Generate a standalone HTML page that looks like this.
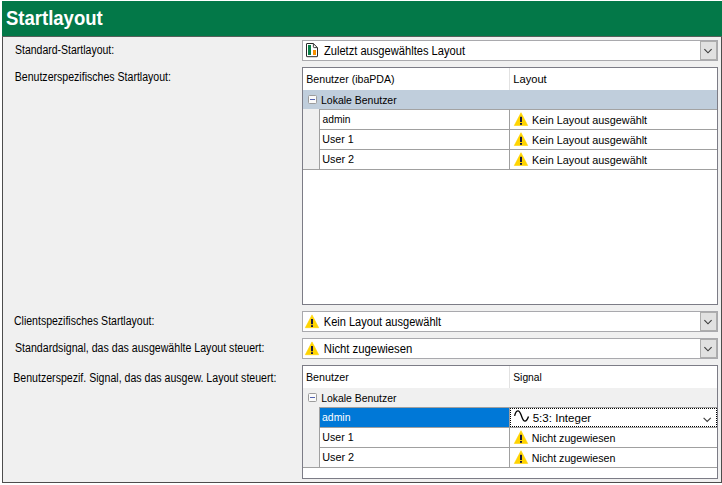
<!DOCTYPE html>
<html><head><meta charset="utf-8">
<style>
html,body{margin:0;padding:0;background:#fff;}
body{width:722px;height:485px;position:relative;overflow:hidden;font-family:"Liberation Sans",sans-serif;font-size:12px;color:#000;}
.a{position:absolute;}
.t{position:absolute;white-space:nowrap;line-height:14px;transform-origin:0 0;}
#panel{left:2px;top:1px;width:718px;height:481px;background:#f0f0f0;border-left:1px solid #4d4d4d;border-right:1px solid #4d4d4d;border-bottom:1px solid #4d4d4d;}
#hdr{left:2px;top:1px;width:720px;height:35px;background:#037848;}
.combo{left:302px;width:414px;height:19px;background:#fff;border:1px solid #a9a9ad;}
.btn{left:700px;width:15px;height:17px;background:#e1e1e1;border:1px solid #adadad;}
.grid{left:302px;width:414px;background:#fff;border:1px solid #7c7c86;}
.hl{position:absolute;height:1px;background:#a0a0a0;}
.vl{position:absolute;width:1px;background:#a0a0a0;}
svg{position:absolute;overflow:visible;}
</style></head><body>
<div class="a" id="panel"></div>
<div class="a" id="hdr"></div>
<div class="a" style="left:2px;top:36px;width:720px;height:1px;background:#55605a"></div>

<!-- combos -->
<div class="a combo" style="top:40px"></div><div class="a btn" style="top:41px"></div>
<div class="a combo" style="top:311px"></div><div class="a btn" style="top:312px"></div>
<div class="a combo" style="top:338px"></div><div class="a btn" style="top:339px"></div>

<!-- grid 1 -->
<div class="a grid" style="top:67px;height:236px"></div>
<div class="a" style="left:509px;top:68px;width:1px;height:22px;background:#e2e2e2"></div>
<div class="a" style="left:303px;top:90px;width:414px;height:19px;background:#c0cedc"></div>
<div class="a" style="left:303px;top:109px;width:16px;height:61px;background:#f0f0f0"></div>
<div class="hl" style="left:319px;top:109px;width:398px;background:#a3a3a3"></div>
<div class="hl" style="left:319px;top:129px;width:398px"></div>
<div class="hl" style="left:319px;top:149px;width:398px"></div>
<div class="hl" style="left:303px;top:169px;width:414px"></div>
<div class="vl" style="left:319px;top:109px;height:61px"></div>
<div class="vl" style="left:509px;top:109px;height:61px"></div>

<!-- grid 2 -->
<div class="a grid" style="top:365px;height:112px"></div>
<div class="a" style="left:509px;top:366px;width:1px;height:22px;background:#e2e2e2"></div>
<div class="a" style="left:303px;top:388px;width:414px;height:19px;background:#f0f0f0"></div>
<div class="a" style="left:303px;top:407px;width:16px;height:61px;background:#f0f0f0"></div>
<div class="hl" style="left:319px;top:407px;width:398px"></div>
<div class="hl" style="left:319px;top:427px;width:398px"></div>
<div class="hl" style="left:319px;top:447px;width:398px"></div>
<div class="hl" style="left:303px;top:467px;width:414px"></div>
<div class="vl" style="left:319px;top:407px;height:61px"></div>
<div class="vl" style="left:509px;top:407px;height:61px"></div>
<div class="a" style="left:320px;top:408px;width:189px;height:19px;background:#0078d7"></div>
<div class="a" style="left:510px;top:408px;width:205px;height:17px;border:1px dotted #000;background:#fff"></div>

<svg width="722" height="485" viewBox="0 0 722 485" style="left:0;top:0">
 <!-- doc icon -->
 <path d="M307 43.5 H313.3 L317.5 47.7 V56.3 Q317.5 56.7 317.1 56.7 H306.9 Q306.5 56.7 306.5 56.3 V43.9 Q306.5 43.5 306.9 43.5 Z" fill="#fff" stroke="#2b2b2b" stroke-width="1"/>
 <path d="M313.4 43.6 V46.8 Q313.4 47.6 314.2 47.6 H317.4" fill="none" stroke="#2b2b2b" stroke-width="0.9"/>
 <rect x="308" y="45" width="3" height="10" fill="#0a8048"/>
 <rect x="313" y="50" width="3" height="5" fill="#f79000"/>
 <!-- chevrons -->
 <g transform="translate(704 49.2)"><path d="M0.4 0 L4 3.6 L7.6 0" fill="none" stroke="#3c3c3c" stroke-width="1.15"/></g>
 <g transform="translate(704 320.2)"><path d="M0.4 0 L4 3.6 L7.6 0" fill="none" stroke="#3c3c3c" stroke-width="1.15"/></g>
 <g transform="translate(704 347.2)"><path d="M0.4 0 L4 3.6 L7.6 0" fill="none" stroke="#3c3c3c" stroke-width="1.15"/></g>
 <g transform="translate(703.2 417.8)"><path d="M0.4 0 L4 3.6 L7.6 0" fill="none" stroke="#3c3c3c" stroke-width="1.15"/></g>
 <!-- warnings -->
 <g transform="translate(305 314.5)"><path d="M7 0.4 L13.7 13.2 L0.3 13.2 Z" fill="#ffd400" stroke="#ffd400" stroke-width="0.6" stroke-linejoin="round"/>
    <rect x="6" y="4.5" width="2" height="5.2" fill="#1a1a40"/>
    <rect x="6" y="10.7" width="2" height="1.8" fill="#1a1a40"/></g>
 <g transform="translate(305 341.5)"><path d="M7 0.4 L13.7 13.2 L0.3 13.2 Z" fill="#ffd400" stroke="#ffd400" stroke-width="0.6" stroke-linejoin="round"/>
    <rect x="6" y="4.5" width="2" height="5.2" fill="#1a1a40"/>
    <rect x="6" y="10.7" width="2" height="1.8" fill="#1a1a40"/></g>
 <g transform="translate(514 112.3)"><path d="M7 0.4 L13.7 13.2 L0.3 13.2 Z" fill="#ffd400" stroke="#ffd400" stroke-width="0.6" stroke-linejoin="round"/>
    <rect x="6" y="4.5" width="2" height="5.2" fill="#1a1a40"/>
    <rect x="6" y="10.7" width="2" height="1.8" fill="#1a1a40"/></g>
 <g transform="translate(514 132.3)"><path d="M7 0.4 L13.7 13.2 L0.3 13.2 Z" fill="#ffd400" stroke="#ffd400" stroke-width="0.6" stroke-linejoin="round"/>
    <rect x="6" y="4.5" width="2" height="5.2" fill="#1a1a40"/>
    <rect x="6" y="10.7" width="2" height="1.8" fill="#1a1a40"/></g>
 <g transform="translate(514 152.3)"><path d="M7 0.4 L13.7 13.2 L0.3 13.2 Z" fill="#ffd400" stroke="#ffd400" stroke-width="0.6" stroke-linejoin="round"/>
    <rect x="6" y="4.5" width="2" height="5.2" fill="#1a1a40"/>
    <rect x="6" y="10.7" width="2" height="1.8" fill="#1a1a40"/></g>
 <g transform="translate(514 430.3)"><path d="M7 0.4 L13.7 13.2 L0.3 13.2 Z" fill="#ffd400" stroke="#ffd400" stroke-width="0.6" stroke-linejoin="round"/>
    <rect x="6" y="4.5" width="2" height="5.2" fill="#1a1a40"/>
    <rect x="6" y="10.7" width="2" height="1.8" fill="#1a1a40"/></g>
 <g transform="translate(514 450.3)"><path d="M7 0.4 L13.7 13.2 L0.3 13.2 Z" fill="#ffd400" stroke="#ffd400" stroke-width="0.6" stroke-linejoin="round"/>
    <rect x="6" y="4.5" width="2" height="5.2" fill="#1a1a40"/>
    <rect x="6" y="10.7" width="2" height="1.8" fill="#1a1a40"/></g>
 <!-- expanders -->
 <g transform="translate(308 95)"><rect x="0.5" y="0.5" width="8" height="8" rx="1" fill="#fafafa" stroke="#9c9c9c"/>
    <rect x="2" y="4" width="5" height="1" fill="#5363b0"/></g>
 <g transform="translate(308 393)"><rect x="0.5" y="0.5" width="8" height="8" rx="1" fill="#fafafa" stroke="#9c9c9c"/>
    <rect x="2" y="4" width="5" height="1" fill="#5363b0"/></g>
 <!-- sine -->
 <path d="M514.6 415.8 C515.5 412.4 516.7 410.9 518 410.9 C519.8 410.9 520.6 413.6 521.5 416 C522.4 418.4 523.2 421.1 525 421.1 C526.4 421.1 527.5 419.4 528.5 416.6" fill="none" stroke="#000" stroke-width="1.35"/>
</svg>
<div class="t" id="title" style="left:6px;top:8px;transform:translateX(0.01px) scale(0.9646,1.03);font-weight:bold;font-size:19.2px;color:#fff;line-height:22px;transform-origin:0 17px;">Startlayout</div>
<div class="t" id="l1" style="left:14px;top:43px;transform:translateX(0.96px) scaleX(0.8749);">Standard-Startlayout:</div>
<div class="t" id="l2" style="left:14px;top:70px;transform:translateX(0.76px) scaleX(0.8804);">Benutzerspezifisches Startlayout:</div>
<div class="t" id="l3" style="left:13px;top:314px;transform:translateX(0.98px) scaleX(0.8769);">Clientspezifisches Startlayout:</div>
<div class="t" id="l4" style="left:15px;top:341px;transform:translateX(0.03px) scaleX(0.8839);">Standardsignal, das das ausgewählte Layout steuert:</div>
<div class="t" id="l5" style="left:13px;top:371px;transform:translateX(0.26px) scaleX(0.8825);">Benutzerspezif. Signal, das das ausgew. Layout steuert:</div>
<div class="t" id="c1t" style="left:323px;top:44px;transform:translateX(0.95px) scaleX(0.9272);">Zuletzt ausgewähltes Layout</div>
<div class="t" id="c2t" style="left:323px;top:315px;transform:translateX(0.78px) scaleX(0.9204);">Kein Layout ausgewählt</div>
<div class="t" id="c3t" style="left:323px;top:342px;transform:translateX(0.71px) scaleX(0.9423);">Nicht zugewiesen</div>
<div class="t" id="g1h1" style="left:306px;top:72px;transform:translateX(0.31px) scaleX(0.9628);font-size:11px;">Benutzer (ibaPDA)</div>
<div class="t" id="g1h2" style="left:513px;top:72px;transform:translateX(0.23px) scaleX(1.0131);font-size:11px;">Layout</div>
<div class="t" id="g1grp" style="left:320px;top:93px;transform:translateX(0.99px) scaleX(0.9521);font-size:11px;">Lokale Benutzer</div>
<div class="t" id="g1r1a" style="left:322px;top:112px;transform:translateX(0.51px) scaleX(0.9341);font-size:11px;">admin</div>
<div class="t" id="g1r2a" style="left:322px;top:132px;transform:translateX(0.37px) scaleX(0.9653);font-size:11px;">User 1</div>
<div class="t" id="g1r3a" style="left:322px;top:152px;transform:translateX(0.15px) scaleX(0.9867);font-size:11px;">User 2</div>
<div class="t" id="g1r1b" style="left:531px;top:113px;transform:translateX(0.98px) scaleX(0.9858);font-size:11px;">Kein Layout ausgewählt</div>
<div class="t" id="g1r2b" style="left:531px;top:133px;transform:translateX(0.98px) scaleX(0.9858);font-size:11px;">Kein Layout ausgewählt</div>
<div class="t" id="g1r3b" style="left:531px;top:153px;transform:translateX(0.98px) scaleX(0.9858);font-size:11px;">Kein Layout ausgewählt</div>
<div class="t" id="g2h1" style="left:305px;top:370px;transform:translateX(0.94px) scaleX(0.9745);font-size:11px;">Benutzer</div>
<div class="t" id="g2h2" style="left:513px;top:370px;transform:translateX(0.26px) scaleX(0.9335);font-size:11px;">Signal</div>
<div class="t" id="g2grp" style="left:321px;top:391px;transform:translateX(0.18px) scaleX(0.9474);font-size:11px;">Lokale Benutzer</div>
<div class="t" id="g2r1a" style="left:322px;top:410px;transform:translateX(0.05px) scaleX(0.9475);color:#fff;font-size:11px;">admin</div>
<div class="t" id="g2r2a" style="left:322px;top:430px;transform:translateX(0.37px) scaleX(0.9653);font-size:11px;">User 1</div>
<div class="t" id="g2r3a" style="left:322px;top:450px;transform:translateX(0.15px) scaleX(0.9867);font-size:11px;">User 2</div>
<div class="t" id="g2r1b" style="left:532px;top:411px;transform:translateX(0.67px) scaleX(1.0522);font-size:11px;">5:3: Integer</div>
<div class="t" id="g2r2b" style="left:531px;top:431px;transform:translateX(0.86px) scaleX(0.9689);font-size:11px;">Nicht zugewiesen</div>
<div class="t" id="g2r3b" style="left:531px;top:451px;transform:translateX(0.86px) scaleX(0.9689);font-size:11px;">Nicht zugewiesen</div>
</body></html>
